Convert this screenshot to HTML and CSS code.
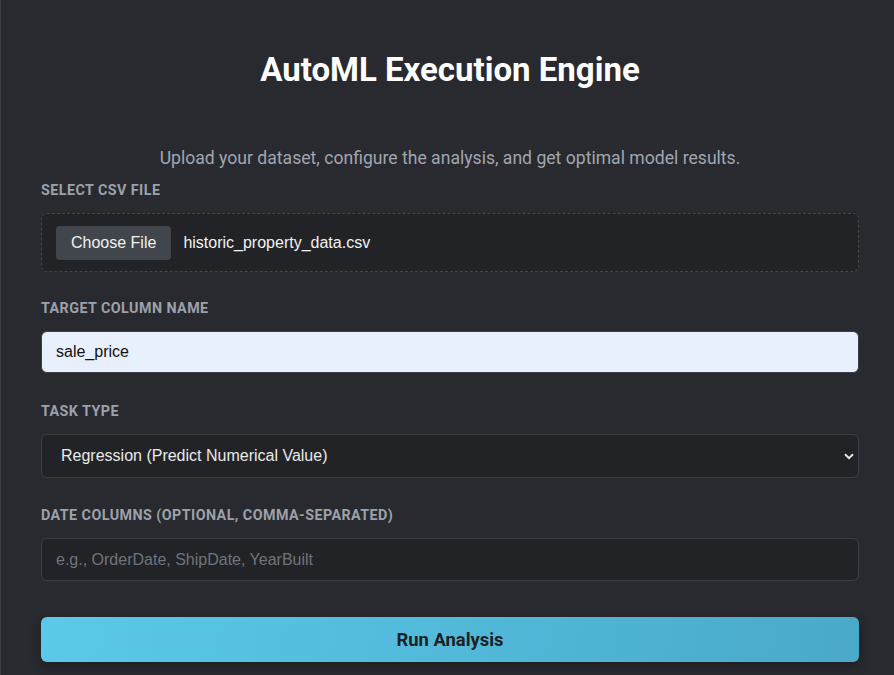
FILE: index.html
```html
<!DOCTYPE html>
<html lang="en">
<head>
<meta charset="utf-8">
<title>AutoML Execution Engine</title>
<link rel="stylesheet" href="styles.css">
</head>
<body>
<main class="card">
  <h1 class="title">AutoML Execution Engine</h1>
  <p class="subtitle">Upload your dataset, configure the analysis, and get optimal model results.</p>

  <div class="field field-first">
    <label class="label">Select CSV File</label>
    <div class="file-box">
      <span class="file-btn">Choose File</span>
      <span class="file-name">historic_property_data.csv</span>
    </div>
  </div>

  <div class="field field-target">
    <label class="label">Target Column Name</label>
    <div class="input input-filled">sale_price</div>
  </div>

  <div class="field field-task">
    <label class="label">Task Type</label>
    <div class="input select">
      <span>Regression (Predict Numerical Value)</span>
      <svg class="chev" width="10" height="7" viewBox="0 0 10 7"><path d="M1 1.2 L5 5.2 L9 1.2" fill="none" stroke="#e6e6e6" stroke-width="2"/></svg>
    </div>
  </div>

  <div class="field">
    <label class="label">Date Columns (Optional, Comma-Separated)</label>
    <div class="input placeholder">e.g., OrderDate, ShipDate, YearBuilt</div>
  </div>

  <button class="run">Run Analysis</button>
</main>
</body>
</html>
```
FILE: styles.css
```css
* { box-sizing: border-box; }
html, body { margin: 0; padding: 0; background: #282a2f; overflow: hidden; }
body { font-family: "Liberation Sans", Arial, sans-serif; }
.card {
  width: 900px;
  border-left: 1px solid #3b3d43;
  padding: 51px 40px 40px 40px;
  background: #282a2f;
  min-height: 675px;
}
.title {
  font-family: Roboto, "Liberation Sans", sans-serif;
  font-weight: 700;
  font-size: 33px;
  color: #ffffff;
  text-align: center;
  margin: 0 0 0 -6px;
  line-height: 38px;
  width: 830px;
}
.subtitle {
  font-family: Roboto, "Liberation Sans", sans-serif;
  font-size: 17.6px;
  color: #a2a6ae;
  text-align: center;
  margin: 58px 0 0 -6px;
  width: 830px;
  line-height: 22px;
}
.field { margin-top: 29px; width: 818px; }
.field-first { margin-top: 13px; }
.field-target { margin-top: 28px; }
.field-task { margin-top: 30px; }
.label {
  display: block;
  font-family: Roboto, "Liberation Sans", sans-serif;
  font-weight: 700;
  font-size: 14.3px;
  letter-spacing: 0.45px;
  text-transform: uppercase;
  color: #9ca1aa;
  line-height: 16px;
  margin-bottom: 15px;
}
.file-box {
  height: 59px;
  border: 1px dashed #43464c;
  border-radius: 6px;
  background: #222327;
  display: flex;
  align-items: center;
  padding: 0 14px;
}
.file-btn {
  background: #41464d;
  color: #f0f0f0;
  border-radius: 4px;
  height: 34px;
  padding: 0 15px;
  display: flex;
  align-items: center;
  font-size: 16px;
}
.file-name { color: #f2f2f2; font-size: 16px; margin-left: 12px; }
.input {
  height: 43px;
  border: 1px solid #3b3e44;
  border-radius: 6px;
  background: #222327;
  display: flex;
  align-items: center;
  padding: 0 14px;
  font-size: 16px;
  color: #eaeaea;
}
.input-filled { background: #e8effd; color: #111; border-color: #3b3e44; height: 42px; }
.select { justify-content: space-between; padding: 0 4px 0 19px; height: 44px; }
.chev { margin-top: 1px; }
.placeholder { color: #6f737b; height: 43px; }
.run {
  display: block;
  margin-top: 36px;
  width: 818px;
  height: 45px;
  border: none;
  border-radius: 6px;
  background: linear-gradient(100deg, #5ac9ea 0%, #4aa9c9 100%);
  box-shadow: 0 4px 12px rgba(0,0,0,0.3);
  color: #1d2126;
  font-family: Roboto, "Liberation Sans", sans-serif;
  font-weight: 700;
  font-size: 18.4px;
}
```
